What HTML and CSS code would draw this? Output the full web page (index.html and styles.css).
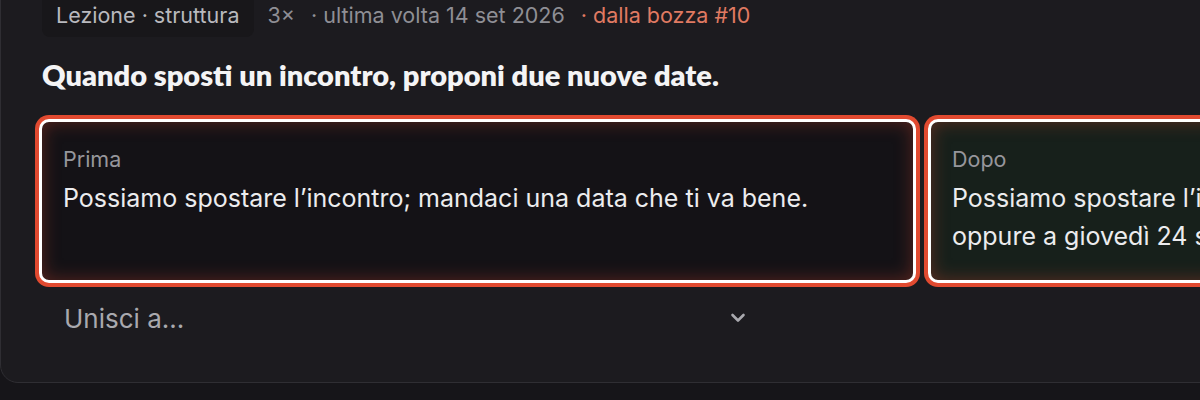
FILE: index.html
```html
<!DOCTYPE html>
<html lang="it">
<head>
  <meta charset="UTF-8">
  <meta name="viewport" content="width=device-width, initial-scale=1.0">
  <title>Lezione</title>
  <link rel="stylesheet" href="styles.css">
</head>
<body>
  <div class="panel">
    <div class="meta">
      <span class="tag">Lezione · struttura</span>
      <span class="count">3×</span>
      <span class="when">· ultima volta 14 set 2026</span>
      <span class="source">· dalla bozza #10</span>
    </div>

    <h2 class="rule">Quando sposti un incontro, proponi due nuove date.</h2>

    <div class="compare">
      <div class="box before">
        <div class="label">Prima</div>
        <p class="text">Possiamo spostare l’incontro; mandaci una data che ti va bene.</p>
      </div>
      <div class="box after">
        <div class="label">Dopo</div>
        <p class="text">Possiamo spostare l’incontro a martedì 22 settembre alle 10:00<br>oppure a giovedì 24 settembre alle 15:00.</p>
      </div>
    </div>

    <div class="merge">
      <span class="merge-text">Unisci a...</span>
      <svg class="chevron" width="16" height="12" viewBox="0 0 16 12" fill="none">
        <path d="M2.5 3l5.5 5.5L13.5 3" stroke="#a9a9ae" stroke-width="2.6" stroke-linecap="round" stroke-linejoin="round"/>
      </svg>
    </div>
  </div>
</body>
</html>
```

FILE: styles.css
```css
html, body {
  margin: 0;
  background-color: #161519;
  overflow: hidden;
}

body {
  font-family: Inter, "Noto Sans", sans-serif;
  color: #ececee;
  width: 1200px;
  height: 400px;
}

.panel {
  width: 1900px;
  margin-top: -20px;
  background-color: #1c1b1f;
  border: 1px solid #2f2e33;
  border-radius: 18px;
  padding: 12px 40px 44px 41px;
  box-sizing: border-box;
}

.meta {
  display: flex;
  align-items: center;
  gap: 16px;
  font-size: 21.5px;
  line-height: 26px;
  color: #8f8f95;
}

.tag {
  background-color: #18171a;
  color: #b9b9be;
  border-radius: 8px;
  padding: 9px 14px;
  margin-right: -2px;
}

.source {
  color: #e07a62;
}

.rule {
  margin: 20px 0 27px 0;
  font-family: Lato, sans-serif;
  font-weight: 800;
  font-size: 29px;
  line-height: 35px;
  color: #f4f4f5;
}

.compare {
  display: grid;
  grid-template-columns: 877px 877px;
  gap: 12px;
  margin-left: -3px;
}

.box {
  border: 3px solid #ffffff;
  border-radius: 10px;
  box-shadow: 0 0 0 4px #e14a30, inset 0 0 18px rgba(226, 74, 48, 0.34);
  padding: 25px 21px 20px 21px;
  height: 164px;
  box-sizing: border-box;
}

.before {
  background-color: #141216;
}

.after {
  background-color: #17201b;
}

.label {
  font-size: 21.5px;
  line-height: 24px;
  color: #96969b;
}

.text {
  margin: 8px 0 0 0;
  font-size: 25px;
  line-height: 38px;
  color: #ececee;
  white-space: nowrap;
}

.merge {
  display: flex;
  align-items: center;
  justify-content: space-between;
  width: 704px;
  margin-top: 15px;
  padding: 0 0 0 22px;
  height: 40px;
  box-sizing: border-box;
}

.merge-text {
  font-size: 26px;
  color: #a9a9ae;
}

.chevron {
  display: block;
}
```
